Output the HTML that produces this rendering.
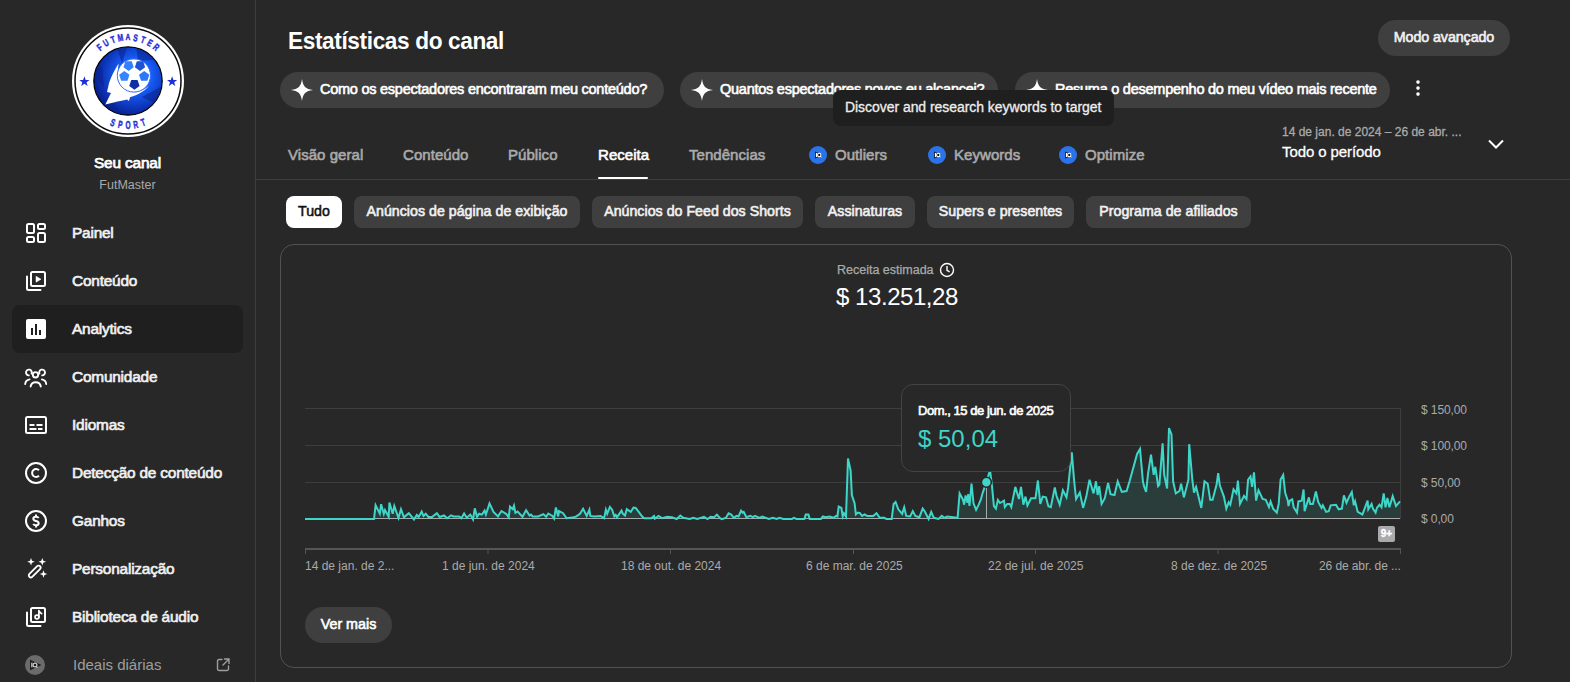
<!DOCTYPE html>
<html><head><meta charset="utf-8">
<style>
*{box-sizing:border-box;margin:0;padding:0}
html,body{width:1570px;height:682px;overflow:hidden;background:#282828;font-family:"Liberation Sans",sans-serif;color:#f1f1f1}
.a{position:absolute;white-space:nowrap}
#side{position:absolute;left:0;top:0;width:256px;height:682px;background:#282828;border-right:1px solid #3e3e3e}
.nav{position:absolute;left:12px;width:231px;height:48px;border-radius:8px}
.nav .ic{position:absolute;left:12px;top:13px;width:24px;height:24px}
.nav .t{position:absolute;left:60px;top:1px;line-height:48px;font-size:15.4px;font-weight:normal;-webkit-text-stroke:0.65px #f1f1f1;color:#f1f1f1;letter-spacing:-0.2px}
.chip{position:absolute;top:72px;height:36px;border-radius:18px;background:#3f3f3f}
.chip .t{position:absolute;left:40px;top:0;line-height:34px;font-size:14.5px;font-weight:normal;-webkit-text-stroke:0.6px #fff;color:#fff;letter-spacing:-0.25px}
.chip svg{position:absolute;left:11px;top:7px}
.tab{position:absolute;top:140px;line-height:30px;font-size:15px;font-weight:normal;-webkit-text-stroke:0.6px #aaa;color:#aaa;letter-spacing:0.05px}
.fchip{position:absolute;top:196px;height:32px;border-radius:8px;background:#3f3f3f;line-height:31px;font-size:14.2px;font-weight:normal;-webkit-text-stroke:0.6px #f1f1f1;color:#f1f1f1;text-align:center;letter-spacing:0.02px}
.iq{position:absolute;width:18px;height:18px;border-radius:50%;background:#2b73ea}
.yl{position:absolute;left:1421px;font-size:12px;color:#aaa;line-height:14px;letter-spacing:-0.1px}
.xl{position:absolute;top:559px;font-size:12px;color:#aaa;line-height:14px}
</style></head><body>
<div id="side">
  <svg class="a" style="left:72px;top:25px" width="112" height="112" viewBox="0 0 112 112">
    <defs>
      <radialGradient id="bg1" cx="60%" cy="42%" r="62%"><stop offset="0" stop-color="#3a8cff"/><stop offset="0.45" stop-color="#1557f0"/><stop offset="1" stop-color="#071c8c"/></radialGradient>
    </defs>
    <circle cx="56" cy="56" r="56" fill="#fff"/>
    <circle cx="56" cy="56" r="53" fill="none" stroke="#0a0a0a" stroke-width="1.5"/>
    <circle cx="56" cy="56" r="34.2" fill="url(#bg1)" stroke="#000" stroke-width="1.2"/>
    <clipPath id="cp1"><circle cx="56" cy="56" r="33.8"/></clipPath><path clip-path="url(#cp1)" d="M44 20 L56 20 L50 38 Z M64 20 L92 34 L66 36 Z M92 60 L90 82 L70 72 Z M30 88 L50 94 L40 74 Z M20 50 L30 40 L32 62 Z" fill="#0a2590" opacity="0.6"/>
    <path d="M46.7 38.5 C42 46 37.5 55 36.4 61 L35 67 L39 68 L33.3 79.5 C42 77 50 75.5 55 74.4 L57 76 L58 72.3 C66 70 73 66 76.9 61.1 C70 67 62 68 56 65 C48 61 44 52 46.7 38.5 Z" fill="#fff"/>
    <circle cx="61.9" cy="50.5" r="16.6" fill="#fff" stroke="#2a70ff" stroke-width="1"/>
    <polygon points="59.77,36.23 61.74,42.27 56.60,46.00 51.46,42.27 53.43,36.23" fill="#3380ff"/>
    <polygon points="71.17,36.23 73.14,42.27 68.00,46.00 62.86,42.27 64.83,36.23" fill="#1d52d6"/>
    <polygon points="52.30,46.10 57.44,49.83 55.47,55.87 49.13,55.87 47.16,49.83" fill="#3585ff"/>
    <polygon points="72.20,46.10 77.34,49.83 75.37,55.87 69.03,55.87 67.06,49.83" fill="#2a78f8"/>
    <polygon points="65.57,55.03 67.54,61.07 62.40,64.80 57.26,61.07 59.23,55.03" fill="#0d2fa6"/>
    <g font-family="Liberation Sans" font-weight="bold" font-size="9.8" fill="#1f2fd8" stroke="#1f2fd8" stroke-width="0.45">
    <text transform="translate(27.72,22.29) rotate(-40) scale(0.68,1)" y="3.4" text-anchor="middle">F</text><text transform="translate(34.00,17.89) rotate(-30) scale(0.68,1)" y="3.4" text-anchor="middle">U</text><text transform="translate(40.95,14.65) rotate(-20) scale(0.68,1)" y="3.4" text-anchor="middle">T</text><text transform="translate(48.36,12.67) rotate(-10) scale(0.68,1)" y="3.4" text-anchor="middle">M</text><text transform="translate(56.00,12.00) rotate(0) scale(0.68,1)" y="3.4" text-anchor="middle">A</text><text transform="translate(63.64,12.67) rotate(10) scale(0.68,1)" y="3.4" text-anchor="middle">S</text><text transform="translate(71.05,14.65) rotate(20) scale(0.68,1)" y="3.4" text-anchor="middle">T</text><text transform="translate(78.00,17.89) rotate(30) scale(0.68,1)" y="3.4" text-anchor="middle">E</text><text transform="translate(84.28,22.29) rotate(40) scale(0.68,1)" y="3.4" text-anchor="middle">R</text><text transform="translate(40.95,97.35) rotate(20) scale(0.62,1)" y="3.8" font-size="10.5" text-anchor="middle">S</text><text transform="translate(48.36,99.33) rotate(10) scale(0.62,1)" y="3.8" font-size="10.5" text-anchor="middle">P</text><text transform="translate(56.00,100.00) rotate(0) scale(0.62,1)" y="3.8" font-size="10.5" text-anchor="middle">O</text><text transform="translate(63.64,99.33) rotate(-10) scale(0.62,1)" y="3.8" font-size="10.5" text-anchor="middle">R</text><text transform="translate(71.05,97.35) rotate(-20) scale(0.62,1)" y="3.8" font-size="10.5" text-anchor="middle">T</text>
    </g>
    <path d="M12.4 51.3l1.3 3.6h3.8l-3 2.3 1.1 3.7-3.2-2.2-3.2 2.2 1.1-3.7-3-2.3h3.8z" fill="#1f2fd8"/>
    <path d="M100.1 51.3l1.3 3.6h3.8l-3 2.3 1.1 3.7-3.2-2.2-3.2 2.2 1.1-3.7-3-2.3h3.8z" fill="#1f2fd8"/>
  </svg>
  <div class="a" style="left:0;width:255px;text-align:center;top:154px;font-size:15.4px;font-weight:normal;-webkit-text-stroke:0.75px #fff;color:#fff;letter-spacing:-0.15px">Seu canal</div>
  <div class="a" style="left:0;width:255px;text-align:center;top:178px;font-size:12.5px;color:#aaa">FutMaster</div>

  <div class="nav" style="top:208px"><svg class="ic" viewBox="0 0 24 24" fill="none" stroke="#fff" stroke-width="2"><rect x="3" y="3" width="7" height="9" rx="1.5"/><rect x="14" y="3" width="7" height="5" rx="1.5"/><rect x="3" y="16" width="7" height="5" rx="1.5"/><rect x="14" y="12" width="7" height="9" rx="1.5"/></svg><div class="t">Painel</div></div>
  <div class="nav" style="top:256px"><svg class="ic" viewBox="0 0 24 24" fill="none" stroke="#fff" stroke-width="2"><rect x="7" y="3" width="14" height="14" rx="1.5"/><path d="M3 7.5v12c0 .8.7 1.5 1.5 1.5H16.5" stroke-linecap="round"/><path d="M12 7.2v6l5-3z" fill="#fff" stroke="#fff" stroke-width="0.5" stroke-linejoin="round"/></svg><div class="t">Conteúdo</div></div>
  <div class="nav" style="top:305px;background:#1f1f1f"><svg class="ic" style="top:12px" viewBox="0 0 24 24"><rect x="2" y="2" width="20" height="20" rx="2" fill="#fff"/><rect x="7" y="11" width="2" height="7" fill="#1f1f1f"/><rect x="11" y="7" width="2" height="11" fill="#1f1f1f"/><rect x="15" y="13" width="2" height="5" fill="#1f1f1f"/></svg><div class="t" style="top:0">Analytics</div></div>
  <div class="nav" style="top:352px"><svg class="ic" viewBox="0 0 24 24" fill="none" stroke="#fff" stroke-width="1.9" stroke-linecap="round"><circle cx="11.5" cy="9.8" r="2.7"/><path d="M6.6 21.5a5.2 5.2 0 0 1 10.2 0"/><path d="M7.6 8.6a2.9 2.9 0 1 0-2.8 1.8"/><path d="M15.4 8.6a2.9 2.9 0 1 1 2.8 1.8"/><path d="M1.2 19a5.3 5.3 0 0 1 4.3-4.6"/><path d="M22.2 19a5.3 5.3 0 0 0-4.3-4.6"/></svg><div class="t">Comunidade</div></div>
  <div class="nav" style="top:400px"><svg class="ic" viewBox="0 0 24 24" fill="none" stroke="#fff" stroke-width="2"><rect x="2" y="4" width="20" height="16" rx="1.5"/><path d="M5.5 12h5M12.5 12h6M5.5 16h7M14 16h4.5"/></svg><div class="t">Idiomas</div></div>
  <div class="nav" style="top:448px"><svg class="ic" viewBox="0 0 24 24" fill="none" stroke="#fff" stroke-width="2"><circle cx="12" cy="12" r="10"/><path d="M15 9.2a4 4 0 1 0 0 5.6"/></svg><div class="t">Detecção de conteúdo</div></div>
  <div class="nav" style="top:496px"><svg class="ic" viewBox="0 0 24 24" fill="none" stroke="#fff" stroke-width="2"><circle cx="12" cy="12" r="10"/><path d="M14.6 9.2c-.4-.9-1.4-1.5-2.6-1.5-1.5 0-2.7.8-2.7 2 0 2.9 5.4 1.6 5.4 4.5 0 1.2-1.2 2.1-2.7 2.1-1.2 0-2.3-.6-2.7-1.5M12 5.5v2.2M12 16.3v2.2"/></svg><div class="t">Ganhos</div></div>
  <div class="nav" style="top:544px"><svg class="ic" viewBox="0 0 24 24" fill="#fff"><rect x="8.7" y="7" width="4" height="15" rx="2" transform="rotate(45 10.7 14.5)" fill="none" stroke="#fff" stroke-width="1.8"/><path d="M7 1l1 2.8 2.8 1-2.8 1L7 8.6l-1-2.8-2.8-1 2.8-1z"/><path d="M18.3 1l1 2.8 2.8 1-2.8 1-1 2.8-1-2.8-2.8-1 2.8-1z"/><path d="M19.5 13.2l1 2.8 2.8 1-2.8 1-1 2.8-1-2.8-2.8-1 2.8-1z"/></svg><div class="t">Personalização</div></div>
  <div class="nav" style="top:592px"><svg class="ic" viewBox="0 0 24 24" fill="none" stroke="#fff" stroke-width="2"><rect x="7" y="3" width="14" height="14" rx="1.5"/><path d="M3 7.5v12c0 .8.7 1.5 1.5 1.5H16.5" stroke-linecap="round"/><path d="M14.9 5.6v6.4M14.9 5.6c.4 1.6 1.9 2.1 2.8 3.1" stroke-width="1.7" stroke-linecap="round"/><circle cx="13" cy="12" r="1.95" stroke-width="1.7"/></svg><div class="t">Biblioteca de áudio</div></div>
  <div class="nav" style="top:640px"><svg class="ic" viewBox="0 0 24 24"><circle cx="11" cy="12" r="10" fill="#6b6b6b"/><path d="M6 6.8v10.4l11.5-5.2z" fill="#1c1c1c"/><rect x="7.2" y="9.6" width="1.3" height="4.8" fill="#ccc"/><circle cx="11" cy="12" r="1.9" fill="none" stroke="#ccc" stroke-width="1.2"/><path d="M12 13.2l1.4 1.4" stroke="#ccc" stroke-width="1.1"/></svg><div class="t" style="color:#9e9e9e;font-weight:normal;left:61px;letter-spacing:0;font-size:15px;-webkit-text-stroke:0">Ideais diárias</div>
    <svg class="a" style="left:204px;top:18px" width="14" height="14" viewBox="0 0 14 14" fill="none" stroke="#9e9e9e" stroke-width="1.4" stroke-linecap="round"><path d="M6 1.5H3A1.5 1.5 0 0 0 1.5 3v8A1.5 1.5 0 0 0 3 12.5h8a1.5 1.5 0 0 0 1.5-1.5V8"/><path d="M8.5 1h4.5v4.5M13 1L7 7"/></svg>
  </div>
</div>

<!-- header -->
<div class="a" style="left:288px;top:27px;font-size:24px;font-weight:bold;color:#fff;letter-spacing:-0.4px;transform:scaleX(0.943);transform-origin:0 0">Estatísticas do canal</div>
<div class="a" style="left:1378px;top:20px;width:132px;height:36px;border-radius:18px;background:#3f3f3f;line-height:35px;text-align:center;font-size:14.3px;font-weight:normal;-webkit-text-stroke:0.6px #f1f1f1;color:#f1f1f1;letter-spacing:-0.1px">Modo avançado</div>

<div class="chip" style="left:280px;width:384px"><svg width="22" height="22" viewBox="0 0 22 22"><path d="M11 0 C12 7.4 14.6 10 22 11 C14.6 12 12 14.6 11 22 C10 14.6 7.4 12 0 11 C7.4 10 10 7.4 11 0Z" fill="#fff"/></svg><div class="t">Como os espectadores encontraram meu conteúdo?</div></div>
<div class="chip" style="left:680px;width:318px"><svg width="22" height="22" viewBox="0 0 22 22"><path d="M11 0 C12 7.4 14.6 10 22 11 C14.6 12 12 14.6 11 22 C10 14.6 7.4 12 0 11 C7.4 10 10 7.4 11 0Z" fill="#fff"/></svg><div class="t">Quantos espectadores novos eu alcancei?</div></div>
<div class="chip" style="left:1015px;width:375px"><svg width="22" height="22" viewBox="0 0 22 22"><path d="M11 0 C12 7.4 14.6 10 22 11 C14.6 12 12 14.6 11 22 C10 14.6 7.4 12 0 11 C7.4 10 10 7.4 11 0Z" fill="#fff"/></svg><div class="t">Resuma o desempenho do meu vídeo mais recente</div></div>
<svg class="a" style="left:1408px;top:78px" width="20" height="20" viewBox="0 0 20 20" fill="#fff"><circle cx="10" cy="4.1" r="1.8"/><circle cx="10" cy="10.1" r="1.8"/><circle cx="10" cy="16.1" r="1.8"/></svg>

<!-- tooltip -->
<div class="a" style="left:833px;top:90px;width:281px;height:36px;border-radius:8px;background:#1f1f1f;line-height:34px;padding-left:12px;font-size:14px;color:#eee;-webkit-text-stroke:0.3px #eee;letter-spacing:-0.05px">Discover and research keywords to target</div>

<!-- tabs -->
<div class="tab" style="left:288px">Visão geral</div>
<div class="tab" style="left:403px">Conteúdo</div>
<div class="tab" style="left:508px">Público</div>
<div class="tab" style="left:598px;color:#fff;-webkit-text-stroke:0.6px #fff">Receita</div>
<div class="a" style="left:598px;top:177px;width:50px;height:2px;border-radius:1px;background:#fff"></div>
<div class="tab" style="left:689px">Tendências</div>
<div class="iq" style="left:809px;top:146px"><svg width="18" height="18" viewBox="0 0 18 18" style="position:absolute;left:0;top:0"><path d="M6.2 5.6v6.8l7.2-3.4z" fill="#0a0a0a"/><rect x="6.9" y="6.9" width="1.3" height="4.2" fill="#fff"/><circle cx="10.3" cy="9" r="1.7" fill="none" stroke="#fff" stroke-width="1.1"/><path d="M11.2 10l1.2 1.3" stroke="#fff" stroke-width="1"/></svg></div><div class="tab" style="left:835px">Outliers</div>
<div class="iq" style="left:928px;top:146px"><svg width="18" height="18" viewBox="0 0 18 18" style="position:absolute;left:0;top:0"><path d="M6.2 5.6v6.8l7.2-3.4z" fill="#0a0a0a"/><rect x="6.9" y="6.9" width="1.3" height="4.2" fill="#fff"/><circle cx="10.3" cy="9" r="1.7" fill="none" stroke="#fff" stroke-width="1.1"/><path d="M11.2 10l1.2 1.3" stroke="#fff" stroke-width="1"/></svg></div><div class="tab" style="left:954px">Keywords</div>
<div class="iq" style="left:1059px;top:146px"><svg width="18" height="18" viewBox="0 0 18 18" style="position:absolute;left:0;top:0"><path d="M6.2 5.6v6.8l7.2-3.4z" fill="#0a0a0a"/><rect x="6.9" y="6.9" width="1.3" height="4.2" fill="#fff"/><circle cx="10.3" cy="9" r="1.7" fill="none" stroke="#fff" stroke-width="1.1"/><path d="M11.2 10l1.2 1.3" stroke="#fff" stroke-width="1"/></svg></div><div class="tab" style="left:1085px">Optimize</div>
<div class="a" style="left:256px;top:179px;width:1314px;height:1px;background:#3e3e3e"></div>

<div class="a" style="left:1282px;top:125px;font-size:12px;color:#aaa;-webkit-text-stroke:0.3px #aaa">14 de jan. de 2024 – 26 de abr. ...</div>
<div class="a" style="left:1282px;top:143px;font-size:15px;color:#fff;-webkit-text-stroke:0.3px #fff;letter-spacing:-0.1px">Todo o período</div>
<svg class="a" style="left:1486px;top:134px" width="20" height="20" viewBox="0 0 20 20" fill="none" stroke="#fff" stroke-width="2"><path d="M3 6.5l7 7 7-7"/></svg>

<!-- filter chips -->
<div class="fchip" style="left:286px;width:56px;background:#fff;color:#0f0f0f;-webkit-text-stroke:0.5px #0f0f0f">Tudo</div>
<div class="fchip" style="left:354px;width:226px">Anúncios de página de exibição</div>
<div class="fchip" style="left:592px;width:211px">Anúncios do Feed dos Shorts</div>
<div class="fchip" style="left:815px;width:100px">Assinaturas</div>
<div class="fchip" style="left:927px;width:147px">Supers e presentes</div>
<div class="fchip" style="left:1086px;width:165px">Programa de afiliados</div>

<!-- card -->
<div class="a" style="left:280px;top:244px;width:1232px;height:424px;border:1px solid #525252;border-radius:14px"></div>
<div class="a" style="left:837px;top:263px;font-size:12.5px;color:#aaa;-webkit-text-stroke:0.25px #aaa">Receita estimada</div>
<svg class="a" style="left:939px;top:262px" width="16" height="16" viewBox="0 0 16 16" fill="none" stroke="#fff" stroke-width="1.4"><circle cx="8" cy="8" r="6.5"/><path d="M8 4v4.3l2.6 1.6"/></svg>
<div class="a" style="left:836px;top:283px;font-size:24px;color:#fff;letter-spacing:-0.45px">$ 13.251,28</div>

<svg class="a" style="left:0;top:0" width="1570" height="682">
  <g stroke="#3e3e3e" stroke-width="1">
    <line x1="305" y1="408.5" x2="1400" y2="408.5"/>
    <line x1="305" y1="445.5" x2="1400" y2="445.5"/>
    <line x1="305" y1="482.5" x2="1400" y2="482.5"/>
    <line x1="1400.5" y1="408" x2="1400.5" y2="519"/>
  </g>
  <path d="M305,518.5 L305.0,519.0 L374.0,519.0 L375.6,505.2 L379.8,513.7 L381.1,504.2 L383.8,514.0 L385.0,510.0 L388.7,516.8 L389.4,502.5 L392.7,513.7 L394.3,506.0 L398.5,518.0 L401.0,509.2 L403.9,517.3 L408.8,513.2 L414.0,519.5 L416.8,515.0 L418.6,517.0 L421.7,511.5 L423.5,516.0 L425.7,513.7 L428.4,517.0 L432.0,517.0 L436.9,513.2 L439.6,517.0 L444.0,515.5 L447.1,518.2 L451.1,515.3 L453.4,516.4 L459.2,516.4 L461.4,518.2 L464.1,513.5 L466.8,517.7 L470.3,514.6 L473.0,519.5 L474.8,508.3 L477.0,516.8 L479.2,513.7 L481.9,514.6 L484.6,510.6 L485.9,514.6 L489.5,503.4 L493.5,511.9 L498.0,516.4 L501.5,511.0 L506.4,514.1 L508.7,517.3 L510.0,506.6 L512.7,509.2 L514.0,505.7 L515.4,512.8 L517.6,511.5 L522.5,516.8 L526.1,510.1 L529.6,515.5 L531.0,514.6 L532.7,516.4 L538.1,516.4 L543.4,514.1 L546.1,516.8 L548.3,513.5 L552.4,515.9 L554.1,518.6 L555.9,507.5 L558.2,516.4 L559.0,511.0 L563.1,513.2 L566.6,518.2 L573.8,517.3 L576.4,516.4 L580.0,513.7 L583.1,508.8 L586.7,515.9 L589.4,509.7 L590.3,515.9 L594.3,516.4 L600.5,515.9 L604.1,518.2 L605.9,509.7 L607.2,513.7 L609.9,507.0 L612.1,509.7 L614.3,516.4 L615.7,515.0 L617.0,517.3 L621.5,510.6 L622.8,513.7 L625.0,515.5 L626.8,509.2 L630.8,511.9 L633.5,507.5 L635.7,507.9 L642.4,516.8 L644.2,518.2 L651.3,518.2 L654.0,515.9 L654.9,518.6 L658.5,515.9 L662.0,518.2 L667.4,516.8 L671.8,517.3 L676.8,519.0 L680.3,515.5 L683.4,517.7 L689.7,519.0 L693.3,517.7 L697.3,519.0 L704.0,516.8 L707.5,519.0 L710.6,516.8 L714.2,517.3 L716.9,514.6 L720.0,518.2 L722.0,519.2 L726.0,517.8 L728.6,513.2 L731.2,514.5 L733.9,517.8 L736.5,515.9 L738.5,516.5 L741.1,510.6 L742.7,512.6 L743.7,511.9 L746.4,517.2 L750.3,515.9 L753.0,517.2 L755.0,515.9 L759.6,517.8 L762.2,516.5 L768.8,518.9 L772.8,517.8 L776.7,518.9 L779.4,517.8 L783.3,518.9 L791.9,518.9 L793.9,517.8 L796.5,518.9 L804.4,518.9 L805.8,514.5 L808.4,514.5 L809.7,518.9 L820.9,518.9 L822.9,516.5 L825.6,517.2 L829.5,516.5 L833.5,517.8 L836.1,515.9 L837.4,516.5 L838.7,506.6 L841.4,508.0 L842.7,516.5 L844.0,513.2 L846.0,516.5 L848.0,458.5 L850.6,470.3 L851.9,495.4 L854.6,503.3 L855.9,514.5 L857.9,512.6 L860.0,513.2 L862.0,515.9 L864.6,514.5 L867.3,515.9 L869.9,515.9 L873.2,515.9 L876.5,513.2 L879.8,517.8 L884.4,517.8 L886.4,518.9 L891.7,518.9 L893.6,504.0 L895.6,502.0 L898.3,509.3 L902.2,513.9 L904.2,507.3 L906.2,515.9 L910.1,516.5 L912.8,511.2 L915.4,515.9 L919.4,517.2 L922.7,508.6 L924.7,511.2 L928.6,518.9 L931.2,511.9 L933.9,517.8 L938.5,518.9 L941.8,515.9 L944.4,517.8 L947.1,516.5 L957.6,517.8 L959.6,493.4 L962.9,499.4 L964.2,504.7 L965.6,495.4 L967.5,502.7 L968.2,494.0 L969.5,506.0 L971.5,483.5 L973.5,503.3 L976.1,509.9 L978.7,504.7 L980.7,500.0 L982.7,492.8 L986.4,482.2 L990.0,470.0 L992.0,486.2 L993.9,506.0 L995.9,508.6 L997.9,500.0 L1000.0,503.0 L1004.0,500.6 L1004.8,507.1 L1007.3,503.9 L1009.7,503.9 L1011.3,507.1 L1012.9,499.0 L1015.3,486.9 L1019.0,499.0 L1021.0,486.9 L1023.4,504.7 L1025.5,496.6 L1027.4,505.5 L1031.0,498.2 L1035.5,498.2 L1037.9,480.5 L1040.3,503.9 L1042.7,496.6 L1046.0,497.4 L1048.4,506.3 L1050.8,507.1 L1054.8,487.4 L1056.5,495.8 L1059.7,504.7 L1062.9,490.2 L1066.5,497.4 L1068.1,487.7 L1071.8,452.3 L1074.2,481.3 L1076.1,499.0 L1079.8,492.6 L1083.1,507.9 L1086.3,496.6 L1089.5,479.7 L1093.5,493.4 L1096.0,481.3 L1097.6,495.0 L1099.2,486.1 L1101.6,503.9 L1104.8,498.2 L1108.1,482.9 L1110.5,494.2 L1114.5,495.0 L1117.7,481.3 L1121.8,491.8 L1126.6,491.0 L1129.8,480.5 L1133.1,468.4 L1137.1,453.9 L1140.0,449.0 L1142.9,481.3 L1144.0,486.1 L1146.1,491.8 L1148.1,473.2 L1151.0,454.7 L1153.7,474.8 L1155.3,466.8 L1158.1,486.1 L1159.4,484.5 L1162.6,443.4 L1164.2,474.8 L1167.1,488.5 L1169.0,428.1 L1171.5,434.5 L1173.1,481.3 L1175.8,493.4 L1179.5,491.0 L1181.1,483.7 L1183.9,497.4 L1188.4,479.7 L1189.2,444.2 L1192.4,480.5 L1194.0,492.6 L1196.1,486.9 L1201.3,507.9 L1204.5,481.3 L1207.7,483.7 L1210.2,499.8 L1212.6,499.8 L1216.6,484.5 L1218.2,473.2 L1219.8,485.3 L1223.9,496.6 L1226.3,508.7 L1228.7,502.3 L1230.3,504.7 L1233.5,489.4 L1236.5,493.4 L1237.9,480.5 L1240.0,503.9 L1244.0,495.8 L1246.5,499.0 L1248.1,479.7 L1250.5,476.5 L1252.1,486.9 L1254.0,472.4 L1256.1,500.6 L1258.5,490.2 L1262.6,499.0 L1265.8,499.8 L1269.0,507.1 L1270.6,501.5 L1273.1,508.7 L1276.8,512.7 L1278.7,503.9 L1280.6,479.6 L1283.2,475.0 L1285.2,492.8 L1287.8,500.7 L1288.5,506.0 L1289.8,500.7 L1292.2,499.4 L1293.7,507.3 L1297.0,512.6 L1298.4,501.4 L1301.7,500.7 L1303.6,489.5 L1304.6,511.2 L1308.9,497.4 L1310.2,504.0 L1312.9,504.0 L1315.9,491.5 L1318.2,502.0 L1321.5,508.0 L1322.8,505.3 L1326.1,511.9 L1328.7,511.2 L1330.7,505.3 L1336.0,504.7 L1338.6,509.3 L1341.9,508.6 L1343.9,495.4 L1346.5,502.7 L1349.2,496.7 L1351.8,492.1 L1353.8,505.3 L1355.1,501.4 L1357.7,511.9 L1362.4,514.5 L1367.6,500.7 L1368.3,509.3 L1371.6,504.0 L1372.9,508.6 L1375.6,512.6 L1376.9,508.0 L1379.5,504.7 L1381.5,507.3 L1383.7,493.4 L1385.5,507.3 L1387.4,498.0 L1389.4,507.3 L1392.7,496.1 L1396.0,506.0 L1400.0,501.4 L1400,518.5 Z" fill="rgba(61,214,200,0.12)"/>
  <line x1="305" y1="518.5" x2="1400" y2="518.5" stroke="#aaa" stroke-width="1"/>
  <line x1="986.5" y1="482" x2="986.5" y2="518" stroke="#aaa" stroke-width="1"/>
  <polyline points="305.0,519.0 374.0,519.0 375.6,505.2 379.8,513.7 381.1,504.2 383.8,514.0 385.0,510.0 388.7,516.8 389.4,502.5 392.7,513.7 394.3,506.0 398.5,518.0 401.0,509.2 403.9,517.3 408.8,513.2 414.0,519.5 416.8,515.0 418.6,517.0 421.7,511.5 423.5,516.0 425.7,513.7 428.4,517.0 432.0,517.0 436.9,513.2 439.6,517.0 444.0,515.5 447.1,518.2 451.1,515.3 453.4,516.4 459.2,516.4 461.4,518.2 464.1,513.5 466.8,517.7 470.3,514.6 473.0,519.5 474.8,508.3 477.0,516.8 479.2,513.7 481.9,514.6 484.6,510.6 485.9,514.6 489.5,503.4 493.5,511.9 498.0,516.4 501.5,511.0 506.4,514.1 508.7,517.3 510.0,506.6 512.7,509.2 514.0,505.7 515.4,512.8 517.6,511.5 522.5,516.8 526.1,510.1 529.6,515.5 531.0,514.6 532.7,516.4 538.1,516.4 543.4,514.1 546.1,516.8 548.3,513.5 552.4,515.9 554.1,518.6 555.9,507.5 558.2,516.4 559.0,511.0 563.1,513.2 566.6,518.2 573.8,517.3 576.4,516.4 580.0,513.7 583.1,508.8 586.7,515.9 589.4,509.7 590.3,515.9 594.3,516.4 600.5,515.9 604.1,518.2 605.9,509.7 607.2,513.7 609.9,507.0 612.1,509.7 614.3,516.4 615.7,515.0 617.0,517.3 621.5,510.6 622.8,513.7 625.0,515.5 626.8,509.2 630.8,511.9 633.5,507.5 635.7,507.9 642.4,516.8 644.2,518.2 651.3,518.2 654.0,515.9 654.9,518.6 658.5,515.9 662.0,518.2 667.4,516.8 671.8,517.3 676.8,519.0 680.3,515.5 683.4,517.7 689.7,519.0 693.3,517.7 697.3,519.0 704.0,516.8 707.5,519.0 710.6,516.8 714.2,517.3 716.9,514.6 720.0,518.2 722.0,519.2 726.0,517.8 728.6,513.2 731.2,514.5 733.9,517.8 736.5,515.9 738.5,516.5 741.1,510.6 742.7,512.6 743.7,511.9 746.4,517.2 750.3,515.9 753.0,517.2 755.0,515.9 759.6,517.8 762.2,516.5 768.8,518.9 772.8,517.8 776.7,518.9 779.4,517.8 783.3,518.9 791.9,518.9 793.9,517.8 796.5,518.9 804.4,518.9 805.8,514.5 808.4,514.5 809.7,518.9 820.9,518.9 822.9,516.5 825.6,517.2 829.5,516.5 833.5,517.8 836.1,515.9 837.4,516.5 838.7,506.6 841.4,508.0 842.7,516.5 844.0,513.2 846.0,516.5 848.0,458.5 850.6,470.3 851.9,495.4 854.6,503.3 855.9,514.5 857.9,512.6 860.0,513.2 862.0,515.9 864.6,514.5 867.3,515.9 869.9,515.9 873.2,515.9 876.5,513.2 879.8,517.8 884.4,517.8 886.4,518.9 891.7,518.9 893.6,504.0 895.6,502.0 898.3,509.3 902.2,513.9 904.2,507.3 906.2,515.9 910.1,516.5 912.8,511.2 915.4,515.9 919.4,517.2 922.7,508.6 924.7,511.2 928.6,518.9 931.2,511.9 933.9,517.8 938.5,518.9 941.8,515.9 944.4,517.8 947.1,516.5 957.6,517.8 959.6,493.4 962.9,499.4 964.2,504.7 965.6,495.4 967.5,502.7 968.2,494.0 969.5,506.0 971.5,483.5 973.5,503.3 976.1,509.9 978.7,504.7 980.7,500.0 982.7,492.8 986.4,482.2 990.0,470.0 992.0,486.2 993.9,506.0 995.9,508.6 997.9,500.0 1000.0,503.0 1004.0,500.6 1004.8,507.1 1007.3,503.9 1009.7,503.9 1011.3,507.1 1012.9,499.0 1015.3,486.9 1019.0,499.0 1021.0,486.9 1023.4,504.7 1025.5,496.6 1027.4,505.5 1031.0,498.2 1035.5,498.2 1037.9,480.5 1040.3,503.9 1042.7,496.6 1046.0,497.4 1048.4,506.3 1050.8,507.1 1054.8,487.4 1056.5,495.8 1059.7,504.7 1062.9,490.2 1066.5,497.4 1068.1,487.7 1071.8,452.3 1074.2,481.3 1076.1,499.0 1079.8,492.6 1083.1,507.9 1086.3,496.6 1089.5,479.7 1093.5,493.4 1096.0,481.3 1097.6,495.0 1099.2,486.1 1101.6,503.9 1104.8,498.2 1108.1,482.9 1110.5,494.2 1114.5,495.0 1117.7,481.3 1121.8,491.8 1126.6,491.0 1129.8,480.5 1133.1,468.4 1137.1,453.9 1140.0,449.0 1142.9,481.3 1144.0,486.1 1146.1,491.8 1148.1,473.2 1151.0,454.7 1153.7,474.8 1155.3,466.8 1158.1,486.1 1159.4,484.5 1162.6,443.4 1164.2,474.8 1167.1,488.5 1169.0,428.1 1171.5,434.5 1173.1,481.3 1175.8,493.4 1179.5,491.0 1181.1,483.7 1183.9,497.4 1188.4,479.7 1189.2,444.2 1192.4,480.5 1194.0,492.6 1196.1,486.9 1201.3,507.9 1204.5,481.3 1207.7,483.7 1210.2,499.8 1212.6,499.8 1216.6,484.5 1218.2,473.2 1219.8,485.3 1223.9,496.6 1226.3,508.7 1228.7,502.3 1230.3,504.7 1233.5,489.4 1236.5,493.4 1237.9,480.5 1240.0,503.9 1244.0,495.8 1246.5,499.0 1248.1,479.7 1250.5,476.5 1252.1,486.9 1254.0,472.4 1256.1,500.6 1258.5,490.2 1262.6,499.0 1265.8,499.8 1269.0,507.1 1270.6,501.5 1273.1,508.7 1276.8,512.7 1278.7,503.9 1280.6,479.6 1283.2,475.0 1285.2,492.8 1287.8,500.7 1288.5,506.0 1289.8,500.7 1292.2,499.4 1293.7,507.3 1297.0,512.6 1298.4,501.4 1301.7,500.7 1303.6,489.5 1304.6,511.2 1308.9,497.4 1310.2,504.0 1312.9,504.0 1315.9,491.5 1318.2,502.0 1321.5,508.0 1322.8,505.3 1326.1,511.9 1328.7,511.2 1330.7,505.3 1336.0,504.7 1338.6,509.3 1341.9,508.6 1343.9,495.4 1346.5,502.7 1349.2,496.7 1351.8,492.1 1353.8,505.3 1355.1,501.4 1357.7,511.9 1362.4,514.5 1367.6,500.7 1368.3,509.3 1371.6,504.0 1372.9,508.6 1375.6,512.6 1376.9,508.0 1379.5,504.7 1381.5,507.3 1383.7,493.4 1385.5,507.3 1387.4,498.0 1389.4,507.3 1392.7,496.1 1396.0,506.0 1400.0,501.4" fill="none" stroke="#3dd6c8" stroke-width="2" stroke-linejoin="miter"/>
  <circle cx="986.4" cy="482.2" r="5" fill="#3dd6c8" stroke="#282828" stroke-width="1.5"/>
  <line x1="305" y1="549" x2="1401" y2="549" stroke="#555" stroke-width="2"/>
  <g stroke="#555" stroke-width="1"><line x1="305.5" y1="549" x2="305.5" y2="554"/><line x1="488" y1="549" x2="488" y2="554"/><line x1="670.5" y1="549" x2="670.5" y2="554"/><line x1="853.5" y1="549" x2="853.5" y2="554"/><line x1="1035.5" y1="549" x2="1035.5" y2="554"/><line x1="1218" y1="549" x2="1218" y2="554"/><line x1="1400.5" y1="549" x2="1400.5" y2="554"/></g>
</svg>
<div class="yl" style="top:403px">$ 150,00</div>
<div class="yl" style="top:439px">$ 100,00</div>
<div class="yl" style="top:476px">$ 50,00</div>
<div class="yl" style="top:512px">$ 0,00</div>
<div class="a" style="left:1378px;top:526px;width:17px;height:16px;border-radius:2px;background:#aaa;color:#fff;font-size:10px;font-weight:bold;line-height:16px;text-align:center"><span style="-webkit-text-stroke:0.3px #fff">9+</span></div>
<div class="xl" style="left:305px">14 de jan. de 2...</div>
<div class="xl" style="left:442px">1 de jun. de 2024</div>
<div class="xl" style="left:621px">18 de out. de 2024</div>
<div class="xl" style="left:806px">6 de mar. de 2025</div>
<div class="xl" style="left:988px">22 de jul. de 2025</div>
<div class="xl" style="left:1171px">8 de dez. de 2025</div>
<div class="xl" style="left:1319px;letter-spacing:-0.1px">26 de abr. de ...</div>

<!-- chart tooltip -->
<div class="a" style="left:901px;top:384px;width:170px;height:88px;border-radius:12px;border:1px solid #444;background:#282828"></div>
<div class="a" style="left:918px;top:403px;font-size:13px;font-weight:normal;-webkit-text-stroke:0.6px #fff;color:#fff;letter-spacing:-0.45px">Dom., 15 de jun. de 2025</div>
<div class="a" style="left:918px;top:425px;font-size:24px;color:#3dd6c8">$ 50,04</div>

<div class="a" style="left:305px;top:607px;width:87px;height:36px;border-radius:18px;background:#3f3f3f;line-height:35px;text-align:center;font-size:14.3px;font-weight:normal;-webkit-text-stroke:0.6px #fff;color:#fff;letter-spacing:0px">Ver mais</div>
</body></html>
